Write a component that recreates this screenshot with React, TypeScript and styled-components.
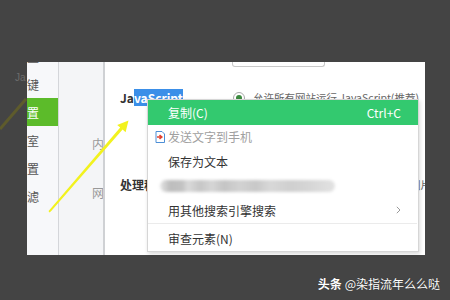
import React from "react";
import styled, { createGlobalStyle } from "styled-components";

const GlobalStyle = createGlobalStyle`
  *, *::before, *::after { box-sizing: border-box; }
  html, body { margin: 0; padding: 0; background: #444; }
  body { font-family: "Noto Sans CJK SC", "Noto Sans", sans-serif; }
`;

const Stage = styled.div`
  position: relative;
  width: 450px;
  height: 300px;
  overflow: hidden;
  background: #444;
  display: flex;
  flex-direction: column;
  padding-top: 62px;
`;

const Window = styled.div`
  margin-left: 27px;
  width: 398px;
  height: 193px;
  flex: none;
  display: flex;
  overflow: hidden;
  background: #fff;
`;

const NavCol = styled.div`
  width: 32px;
  flex: none;
  background: #f7f8fa;
  border-right: 1px solid #d4d6da;
  overflow: hidden;
`;

const NavList = styled.div`
  margin-top: -20px;
  display: flex;
  flex-direction: column;
`;

const NavItem = styled.div<{ $active?: boolean }>`
  height: 28px;
  display: flex;
  align-items: center;
  justify-content: flex-end;
  padding-right: 19px;
  white-space: nowrap;
  overflow: hidden;
  font-size: 12px;
  color: ${(p) => (p.$active ? "#fff" : "#555")};
  background: ${(p) => (p.$active ? "#5cbb2a" : "transparent")};
`;

const SubCol = styled.div`
  width: 46px;
  flex: none;
  background: #f4f5f7;
  border-right: 2px solid #cfd1d4;
  display: flex;
  flex-direction: column;
  padding-top: 74px;
  gap: 33px;
`;

const SubItem = styled.div`
  padding-left: 33px;
  height: 16px;
  line-height: 16px;
  font-size: 12px;
  color: #999;
  white-space: nowrap;
  overflow: hidden;
`;

const Content = styled.div`
  flex: 1;
  display: flex;
  flex-direction: column;
  padding-left: 15px;
`;

const InputStub = styled.div`
  margin-left: 112px;
  width: 93px;
  height: 5px;
  border: 1px solid #c9c9c9;
  border-top: none;
  border-radius: 0 0 3px 3px;
`;

const Row = styled.div<{ $gap: number }>`
  margin-top: ${(p) => p.$gap}px;
  display: grid;
  grid-template-columns: 113px 1fr;
  align-items: center;
  height: 16px;
  line-height: 16px;
  white-space: nowrap;
`;

const Label = styled.div`
  font-size: 12px;
  font-weight: 700;
  color: #333;
`;

const Selected = styled.span`
  background: #3b8fe8;
  color: #fff;
`;

const Value = styled.div<{ $end?: boolean }>`
  display: flex;
  align-items: center;
  gap: 8px;
  font-size: 10.5px;
  color: #666;
  overflow: hidden;
  justify-content: ${(p) => (p.$end ? "flex-end" : "flex-start")};
  margin-right: ${(p) => (p.$end ? "-6px" : "0")};
`;

const Radio = styled.span`
  width: 12px;
  height: 12px;
  flex: none;
  border-radius: 50%;
  border: 1px solid #aaa;
  display: flex;
  align-items: center;
  justify-content: center;
  &::after {
    content: "";
    width: 6px;
    height: 6px;
    border-radius: 50%;
    background: #3b8a3e;
  }
`;

const Watermark = styled.div`
  align-self: flex-end;
  margin-top: 21px;
  padding-right: 10px;
  height: 16px;
  line-height: 16px;
  font-size: 12px;
  color: #fff;
  white-space: nowrap;
  text-shadow: 0 0 1px rgba(0, 0, 0, 0.4);
  b { font-weight: 700; margin-right: 3px; }
`;

const Ghost = styled.div`
  position: absolute;
  left: 15px;
  top: 72px;
  font-family: "Liberation Sans", sans-serif;
  font-size: 10px;
  color: #6c6c6c;
`;

const Menu = styled.div`
  position: absolute;
  left: 147px;
  top: 99px;
  width: 272px;
  background: #fff;
  border: 1px solid #d6d6d6;
  box-shadow: 1px 2px 4px rgba(0, 0, 0, 0.15);
  display: flex;
  flex-direction: column;
`;

const MenuItem = styled.div<{ $active?: boolean; $disabled?: boolean }>`
  height: 24.5px;
  display: flex;
  align-items: center;
  padding: 0 17px 0 20px;
  font-size: 12px;
  white-space: nowrap;
  color: ${(p) => (p.$active ? "#fff" : p.$disabled ? "#a0a0a0" : "#333")};
  background: ${(p) => (p.$active ? "#33c96f" : "transparent")};
`;

const IconSlot = styled.span`
  width: 13px;
  margin-left: -13px;
  display: flex;
  align-items: center;
`;

const Shortcut = styled.span`
  margin-left: auto;
  font-size: 12px;
`;

const Chevron = styled.svg`
  margin-left: auto;
`;

const BlurBar = styled.div`
  margin-left: -8px;
  width: 175px;
  height: 12px;
  border-radius: 6px;
  filter: blur(1.4px);
  background: linear-gradient(
    90deg,
    #e4e4e4 0px,
    #bdbdbd 10px,
    #c2c2c2 22px,
    #dadada 28px,
    #c6c6c6 40px,
    #d6d6d6 52px,
    #c4c4c4 64px,
    #d2d2d2 80px,
    #c8c8c8 96px,
    #d8d8d8 110px,
    #cfcfcf 130px,
    #d6d6d6 150px,
    #e2e2e2 175px
  );
`;

const Separator = styled.div`
  height: 1px;
  margin: 0 1px 3px 0;
  background: #ebebeb;
`;

const Overlay = styled.svg`
  position: absolute;
  left: 0;
  top: 0;
  pointer-events: none;
`;

const navLabels = ["基本设置", "快捷键", "高级设置", "实验室", "安全设置", "广告过滤"];

const DocIcon = () => (
  <svg width="10" height="12" viewBox="0 0 10 12">
    <path d="M1 0.5 H7 L9.5 3 V11.5 H1 Z" fill="#fff" stroke="#4d8fd6" strokeWidth="1" />
    <path d="M2 6 H6.5 M4.5 4 L6.8 6 L4.5 8" fill="none" stroke="#e2412f" strokeWidth="1.6" />
  </svg>
);

export default function App() {
  return (
    <>
      <GlobalStyle />
      <Stage>
        <Ghost>Ja</Ghost>
        <Window>
          <NavCol>
            <NavList>
              {navLabels.map((l, i) => (
                <NavItem key={l} $active={i === 2}>
                  {l}
                </NavItem>
              ))}
            </NavList>
          </NavCol>
          <SubCol>
            <SubItem>内容设置</SubItem>
            <SubItem>网页设置</SubItem>
          </SubCol>
          <Content>
            <InputStub />
            <Row $gap={23}>
              <Label>
                Ja<Selected>vaScript</Selected>
              </Label>
              <Value>
                <Radio />
                允许所有网站运行 JavaScript(推荐)
              </Value>
            </Row>
            <Row $gap={71}>
              <Label>处理程序</Label>
              <Value $end>使用默认程序打开图片</Value>
            </Row>
          </Content>
        </Window>
        <Watermark>
          <b>头条</b>@染指流年么么哒
        </Watermark>

        <Menu>
          <MenuItem $active>
            复制(C)
            <Shortcut>Ctrl+C</Shortcut>
          </MenuItem>
          <MenuItem $disabled>
            <IconSlot>
              <DocIcon />
            </IconSlot>
            发送文字到手机
          </MenuItem>
          <MenuItem>保存为文本</MenuItem>
          <MenuItem>
            <BlurBar />
          </MenuItem>
          <MenuItem>
            用其他搜索引擎搜索
            <Chevron width="5" height="8" viewBox="0 0 5 8">
              <path d="M0.8 0.8 L4 4 L0.8 7.2" fill="none" stroke="#999" strokeWidth="1" />
            </Chevron>
          </MenuItem>
          <Separator />
          <MenuItem>审查元素(N)</MenuItem>
        </Menu>

        <Overlay width="450" height="300" viewBox="0 0 450 300">
          <line x1="0" y1="129" x2="26" y2="99" stroke="#5e5b2c" strokeWidth="3" />
          <polygon
            points="49.2,212.4 50.8,211.6 122.6,129.6 125.6,132.2 128.5,120.5 117.2,124.9 120.2,127.4 48.6,211"
            fill="#f2f21e"
          />
        </Overlay>
      </Stage>
    </>
  );
}
